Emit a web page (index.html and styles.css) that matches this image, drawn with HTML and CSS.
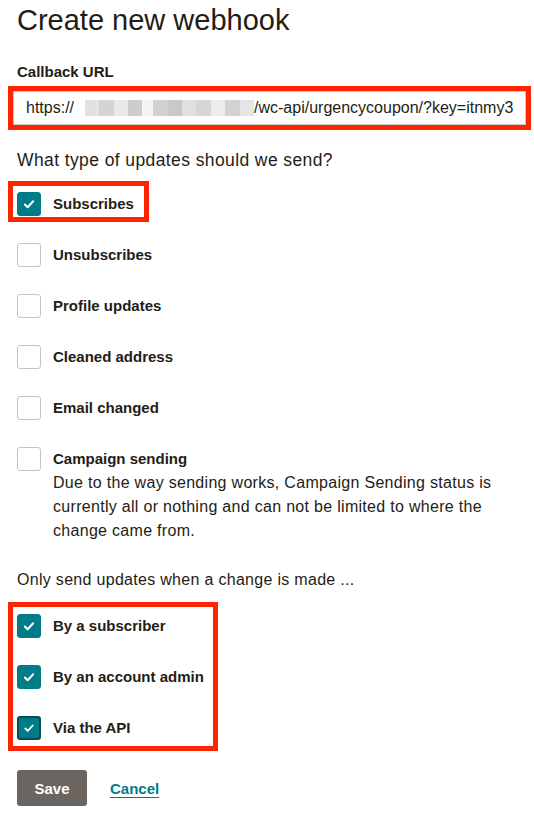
FILE: index.html
```html
<!DOCTYPE html>
<html lang="en">

<head>
  <meta charset="UTF-8">
  <meta name="viewport" content="width=device-width, initial-scale=1.0">
  <title>Create new webhook</title>
  <link rel="stylesheet" href="styles.css">
</head>

<body>
  <h1>Create new webhook</h1>

  <div class="field-label">Callback URL</div>
  <div class="highlight url-highlight">
    <div class="url-input">
      <span>https://</span><span class="blurred"></span><span>/wc-api/urgencycoupon/?key=itnmy3</span>
    </div>
  </div>

  <p class="question">What type of updates should we send?</p>

  <div class="highlight single-highlight">
    <div class="check-row">
      <span class="checkbox checked"><svg viewBox="0 0 24 24"><polyline points="7.5,12.5 10.5,15.5 16.5,9"/></svg></span>
      <span class="check-label">Subscribes</span>
    </div>
  </div>

  <div class="check-list">
    <div class="check-row">
      <span class="checkbox"></span>
      <span class="check-label">Unsubscribes</span>
    </div>
    <div class="check-row">
      <span class="checkbox"></span>
      <span class="check-label">Profile updates</span>
    </div>
    <div class="check-row">
      <span class="checkbox"></span>
      <span class="check-label">Cleaned address</span>
    </div>
    <div class="check-row">
      <span class="checkbox"></span>
      <span class="check-label">Email changed</span>
    </div>
    <div class="check-row">
      <span class="checkbox"></span>
      <div>
        <div class="check-label">Campaign sending</div>
        <div class="check-help">Due to the way sending works, Campaign Sending status is currently all or nothing and can not be limited to where the change came from.</div>
      </div>
    </div>
  </div>

  <p class="question source-question">Only send updates when a change is made ...</p>

  <div class="highlight group-highlight">
    <div class="check-row">
      <span class="checkbox checked"><svg viewBox="0 0 24 24"><polyline points="7.5,12.5 10.5,15.5 16.5,9"/></svg></span>
      <span class="check-label">By a subscriber</span>
    </div>
    <div class="check-row">
      <span class="checkbox checked"><svg viewBox="0 0 24 24"><polyline points="7.5,12.5 10.5,15.5 16.5,9"/></svg></span>
      <span class="check-label">By an account admin</span>
    </div>
    <div class="check-row">
      <span class="checkbox checked focused"><svg viewBox="0 0 24 24"><polyline points="7.5,12.5 10.5,15.5 16.5,9"/></svg></span>
      <span class="check-label">Via the API</span>
    </div>
  </div>

  <div class="actions">
    <button class="save-btn">Save</button>
    <a href="#" class="cancel-link">Cancel</a>
  </div>
</body>

</html>
```

FILE: styles.css
```css
body {
  font-family: "Liberation Sans", Arial, sans-serif;
  color: #241c15;
  margin: 0;
  padding: 0 17px;
  background: #fff;
}

h1 {
  margin: 0;
  font-size: 29px;
  font-weight: 400;
  line-height: 40px;
}

.field-label {
  margin-top: 22px;
  font-size: 15px;
  font-weight: 700;
  line-height: 20px;
}

.highlight {
  border: 5px solid #ff2400;
  margin-left: -9px;
}

.url-highlight {
  margin-top: 4px;
  margin-right: -14px;
}

.url-input {
  height: 32px;
  border: 1px solid #c9c9c9;
  display: flex;
  align-items: center;
  padding: 0 8px 0 12px;
  font-size: 16px;
  white-space: nowrap;
  overflow: hidden;
}

.blurred {
  flex: none;
  display: inline-block;
  width: 180px;
  height: 16px;
  background:
    linear-gradient(90deg, #fff 0 6%, #e2e2e2 6% 14%, #d4d4d4 14% 22%, #e8e8e8 22% 30%, #cdcdcd 30% 38%, #f4f4f4 38% 44%, #d0d0d0 44% 52%, #c9c9c9 52% 60%, #e0e0e0 60% 68%, #d6d6d6 68% 76%, #ececec 76% 84%, #d2d2d2 84% 92%, #e5e5e5 92% 100%);
}

.question {
  margin: 18px 0 0;
  font-size: 17.5px;
  letter-spacing: 0.4px;
  line-height: 24px;
}

.single-highlight {
  margin-top: 9px;
  width: fit-content;
  padding: 6px 10px 1px 4px;
}

.check-list {
  margin-top: 21px;
  display: flex;
  flex-direction: column;
  gap: 27px;
}

.check-row {
  display: flex;
  align-items: flex-start;
  gap: 12px;
}

.checkbox {
  flex: none;
  width: 24px;
  height: 24px;
  box-sizing: border-box;
  border: 1px solid #c4c4c4;
  border-radius: 3px;
  background: #fff;
}

.checkbox.checked {
  background: #007c89;
  border-color: #007c89;
}

.checkbox.focused {
  border: 2px solid #0b4d55;
}

.checkbox svg {
  display: block;
  width: 22px;
  height: 22px;
  fill: none;
  stroke: #fff;
  stroke-width: 2.2;
  stroke-linecap: round;
  stroke-linejoin: round;
}

.checkbox.focused svg {
  width: 20px;
  height: 20px;
}

.check-label {
  font-size: 15px;
  font-weight: 700;
  line-height: 24px;
}

.check-help {
  font-size: 16px;
  letter-spacing: 0.3px;
  line-height: 24px;
  max-width: 450px;
}

.source-question {
  margin-top: 25px;
  font-size: 16px;
  letter-spacing: 0.3px;
}

.group-highlight {
  margin-top: 10px;
  width: fit-content;
  padding: 7px 9px 6px 4px;
  display: flex;
  flex-direction: column;
  gap: 27px;
}

.actions {
  margin-top: 19px;
  display: flex;
  align-items: center;
  gap: 23px;
}

.save-btn {
  width: 70px;
  height: 36px;
  border: none;
  border-radius: 3px;
  background: #6b6561;
  color: #fff;
  font-family: inherit;
  font-size: 15px;
  font-weight: 700;
  cursor: pointer;
}

.cancel-link {
  color: #007c89;
  font-size: 15px;
  font-weight: 700;
  text-decoration: underline;
  text-underline-offset: 3px;
}
```
